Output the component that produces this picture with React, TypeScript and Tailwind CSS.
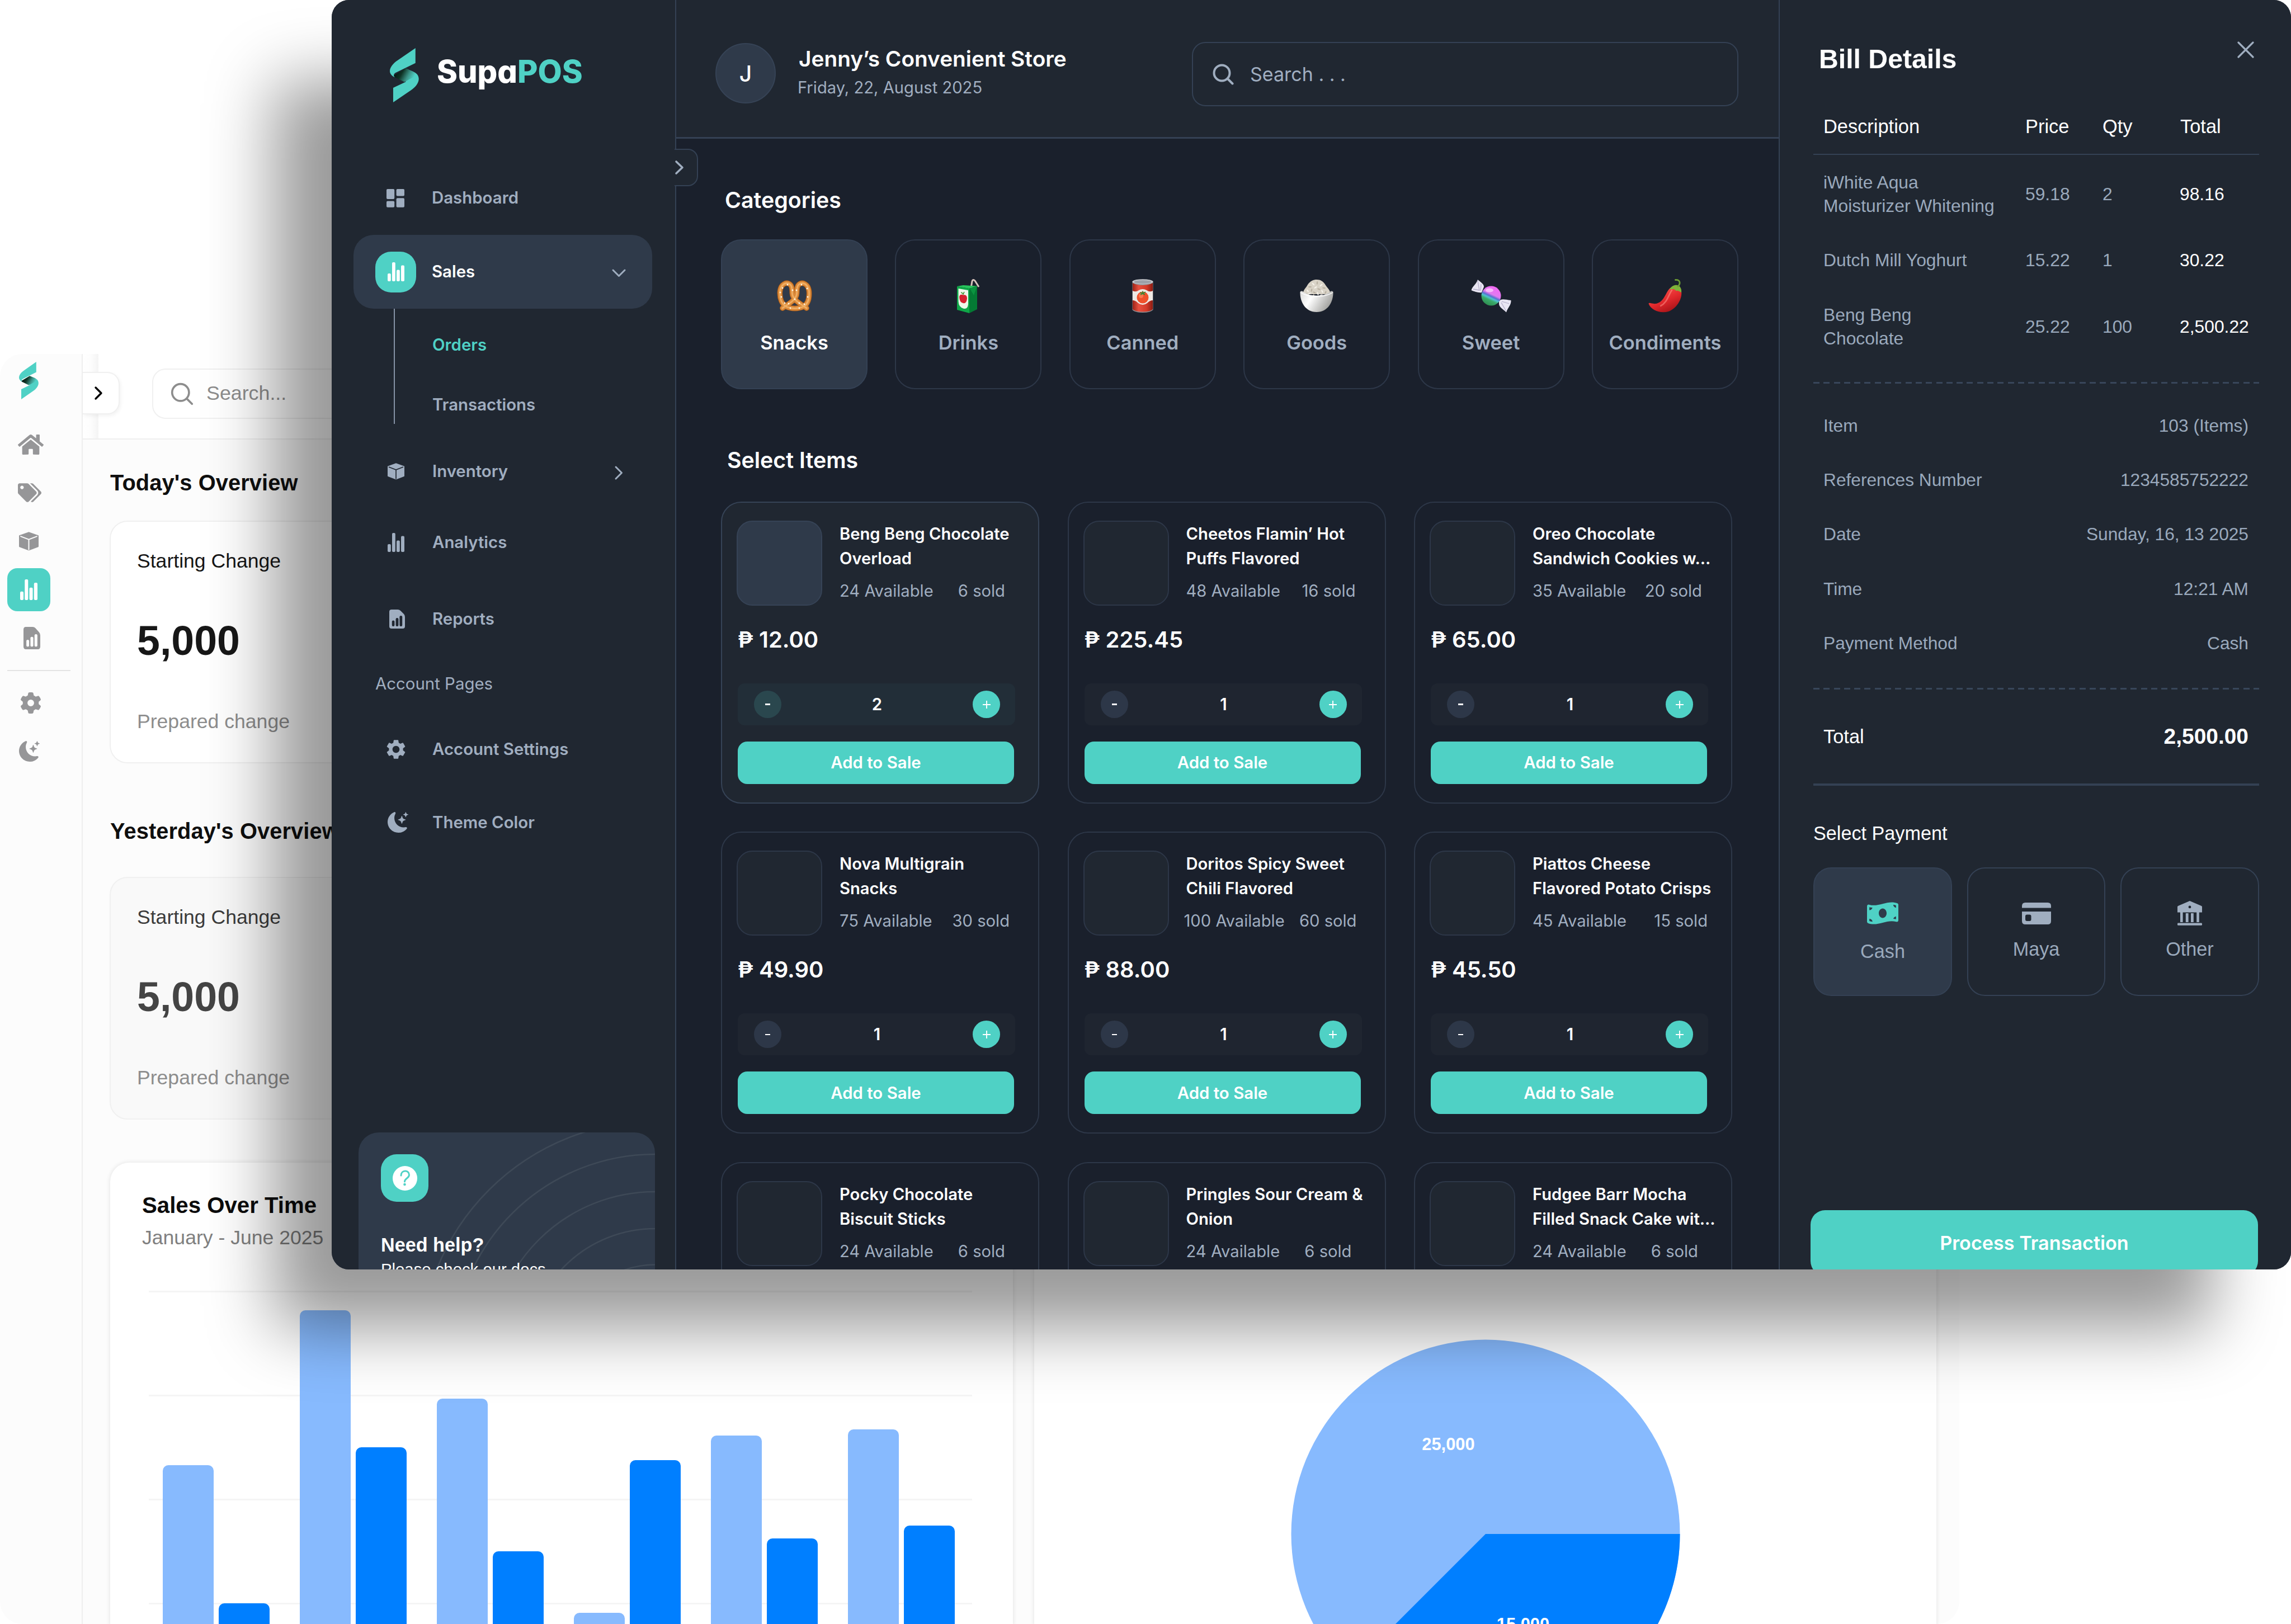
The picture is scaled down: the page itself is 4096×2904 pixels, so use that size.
import type { ReactNode } from "react";
import { BsMoonStarsFill } from "react-icons/bs";
import { FaHome, FaMoneyBillWave, FaTags } from "react-icons/fa";
import { FaGear } from "react-icons/fa6";
import { MdSettings } from "react-icons/md";

/* ---------- icons ---------- */

function LogoMark({ className, id }: { className: string; id: string }) {
  return (
    <svg viewBox="0 0 70 130" className={className} preserveAspectRatio="none">
      <defs>
        <linearGradient id={id} x1="0.05" y1="0.3" x2="0.95" y2="0.6">
          <stop offset="0" stopColor="#04140f" />
          <stop offset="0.35" stopColor="#0f3325" />
          <stop offset="0.7" stopColor="#3c9488" />
          <stop offset="1" stopColor="#4fd1c5" />
        </linearGradient>
      </defs>
      <path d="M38 49 L55 56 C65 60 69.6 66 69.6 74 C69.6 84 61 94 51 101 L8 130 V95 L38 81 Z" fill="#4fd1c5" />
      <path d="M9 66 L38 49 L55 56 C61 59 63 62 60 68 L35 81 L14 71 C10 69 8 68 9 66 Z" fill={`url(#${id})`} />
      <path d="M61.6 0 V35.7 L14 59 C9 61.5 8 66 12 70 C4 66.5 0 61 0 55 C0 46 8 36 19 29 Z" fill="#4fd1c5" />
    </svg>
  );
}

function BarsIcon({ className }: { className: string }) {
  return (
    <svg viewBox="0 0 30 34" className={className} fill="currentColor" preserveAspectRatio="none">
      <rect x="0" y="20" width="5.8" height="14" rx="2" />
      <rect x="8" y="0" width="5.8" height="34" rx="2" />
      <rect x="16" y="13.5" width="5.8" height="20.5" rx="2" />
      <rect x="24" y="5.5" width="6" height="28.5" rx="2" />
    </svg>
  );
}

function DashboardIcon() {
  return (
    <svg viewBox="0 0 32 33" className="h-[33px] w-8" fill="currentColor">
      <rect x="0" y="0" width="14.2" height="18" rx="2" />
      <rect x="0" y="21.5" width="14.2" height="11.3" rx="2" />
      <rect x="17.6" y="0" width="14.4" height="12.6" rx="2" />
      <rect x="17.6" y="16.2" width="14.4" height="16.6" rx="2" />
    </svg>
  );
}

function BoxIcon({ className, seam }: { className: string; seam: string }) {
  return (
    <svg viewBox="0 0 30 30" className={className} preserveAspectRatio="none">
      <path d="M15 0.3 L29.6 5.6 Q30 5.8 30 6.4 V23 Q30 23.8 29.3 24.1 L15 29.6 L0.7 24.1 Q0 23.8 0 23 V6.4 Q0 5.8 0.4 5.6 Z" fill="currentColor" />
      <path d="M2.6 7.2 L15 12 L27.4 7.2 M15 12 V28" fill="none" stroke={seam} strokeWidth="1.7" strokeLinecap="round" />
    </svg>
  );
}

function ReportIcon({ className, ink }: { className: string; ink: string }) {
  return (
    <svg viewBox="0 0 28 34" className={className} preserveAspectRatio="none">
      <path d="M4 0 H15 Q18 0 20 2 L26 8 Q28 10 28 13 V30 Q28 34 24 34 H4 Q0 34 0 30 V4 Q0 0 4 0 Z" fill="currentColor" />
      <g fill={ink}>
        <rect x="4.8" y="19.5" width="4.6" height="10.5" rx="2.2" />
        <rect x="11.6" y="15" width="4.8" height="15" rx="2.2" />
        <rect x="18.4" y="11" width="4.8" height="19" rx="2.2" />
      </g>
    </svg>
  );
}

function Chevron({ className, d, box, width = 3.4 }: { className: string; d: string; box: string; width?: number }) {
  return (
    <svg viewBox={box} className={className} fill="none" stroke="currentColor" strokeWidth={width} strokeLinecap="round" strokeLinejoin="round">
      <path d={d} />
    </svg>
  );
}

function SearchIcon({ className, width }: { className: string; width: number }) {
  return (
    <svg viewBox="0 0 38 38" className={className} fill="none" stroke="currentColor" strokeWidth={width} strokeLinecap="round">
      <circle cx="16.5" cy="16.5" r="14" />
      <path d="M27 27 L35.5 35.5" />
    </svg>
  );
}

function CardIcon() {
  return (
    <svg viewBox="0 0 52 39" className="h-[39px] w-[52px]" fill="currentColor">
      <path d="M6 0 H46 Q52 0 52 6 V9.5 H0 V6 Q0 0 6 0 Z" />
      <path fillRule="evenodd" d="M0 16 H52 V33 Q52 39 46 39 H6 Q0 39 0 33 Z M9 21.5 Q6 21.5 6 24.5 V30 Q6 33 9 33 H13.5 Q16.5 33 16.5 30 V24.5 Q16.5 21.5 13.5 21.5 Z" />
    </svg>
  );
}

function BankIcon() {
  return (
    <svg viewBox="0 0 44 44" className="size-11" fill="currentColor">
      <path fillRule="evenodd" d="M22 0 L43 9 Q44 9.6 44 10.6 V20.5 H0 V10.6 Q0 9.6 1 9 Z M22 8.5 A2.4 2.4 0 1 0 22 13.3 A2.4 2.4 0 1 0 22 8.5 Z" />
      <rect x="5" y="20" width="4.6" height="18" />
      <rect x="14.8" y="22" width="4.8" height="16" />
      <rect x="24" y="22" width="4.8" height="16" />
      <rect x="34.2" y="20" width="4.6" height="18" />
      <rect x="0" y="39.6" width="44" height="4.2" rx="1.4" />
    </svg>
  );
}

function Pretzel() {
  const twist =
    "M10 50 C18 44 31 38 35 27 C37 20 34 13 39 8 C46 2 56 7 57.5 20 C58.5 33 55 43 47 47.5 C38 51.500 26 51.500 17 47.500 C9 43 4.500 33 5.500 20 C7 7 17 2 24 8 C29 13 26 20 28 27 C32 38 45 44 53 50";
  const salt = [
    [8, 30], [10, 14], [19, 8], [28, 18], [14, 41], [24, 50], [32, 34], [40, 50], [49, 43], [55, 30], [54, 15], [44, 8], [35, 18], [40, 41], [21, 42], [6, 22],
  ];
  return (
    <svg viewBox="0 0 63 56" className="h-[56px] w-[63px]" fill="none" strokeLinecap="round">
      <path d={twist} stroke="#a05618" strokeWidth="9.800" />
      <path d={twist} stroke="#da8838" strokeWidth="8" />
      <path d={twist} stroke="#efad62" strokeWidth="3" />
      {salt.map(([x, y]) => (
        <circle key={`${x}-${y}`} cx={x} cy={y} r="1.4" fill="#fff6e6" />
      ))}
    </svg>
  );
}

function JuiceBox() {
  return (
    <svg viewBox="0 0 42 62" className="h-[62px] w-[42px]">
      <path d="M26 17 L28 5 Q29.500 0.500 33 4 L40 15" fill="none" stroke="#d8c3bd" strokeWidth="3" strokeLinejoin="round" />
      <path d="M1 14 L12 12 L37 13.500 L23 18 Z" fill="#27c45c" />
      <path d="M1 14 L23 18 V62 L1 56 Z" fill="#0fa648" />
      <path d="M23 18 L37 13.500 V55 L23 62 Z" fill="#047a34" />
      <path d="M24 18 L37 13.500 L31 30 Z" fill="#0b9440" />
      <path d="M3.500 18 L21 21 V46 Q20 56 12 53.500 Q4 51 3.500 41 Z" fill="#eef7ea" />
      <path d="M5 33 Q6 27 12 29.500 Q19 28 19 36 Q17.500 46 12 44 Q5.500 43 5 33 Z" fill="#d5202f" />
      <path d="M11.500 29 L14 24 M12 27 Q9 26 8.500 24.500" stroke="#3b8f2c" strokeWidth="1.6" fill="none" />
    </svg>
  );
}

function TomatoCan() {
  return (
    <svg viewBox="0 0 38 60" className="h-[60px] w-[38px]">
      <defs>
        <linearGradient id="canBody" x1="0" x2="1">
          <stop offset="0" stopColor="#9c2418" />
          <stop offset="0.3" stopColor="#e8503f" />
          <stop offset="0.7" stopColor="#d33a29" />
          <stop offset="1" stopColor="#8b1c12" />
        </linearGradient>
      </defs>
      <path d="M0.500 4 V55 Q5 60 19 60 Q33 60 37.500 55 V4 Z" fill="#8e8f94" />
      <path d="M1 7 V54 Q6 58.500 19 58.500 Q32 58.500 37 54 V7 Q30 11 19 11 Q8 11 1 7 Z" fill="url(#canBody)" />
      <path d="M1 21 Q7 24 12 20 Q19 16 26 20 Q31 24 37 21 V38 Q32 38 27 43 Q19 49 11 43 Q6 38 1 38 Z" fill="#efe9e4" />
      <circle cx="19" cy="33" r="10.500" fill="#f0512b" />
      <circle cx="16" cy="30" r="4" fill="#ff8a5f" opacity="0.7" />
      <path d="M19 26 L14 24 M19 26 L24 23 M19 26 L19 21.500 M19 26 L15 28 M19 26 L23 28" stroke="#2f8a35" strokeWidth="1.700" />
      <ellipse cx="19" cy="4.800" rx="18.500" ry="4.600" fill="#c9cbd0" />
      <ellipse cx="19" cy="5.200" rx="15.500" ry="3.300" fill="#9da1a9" />
    </svg>
  );
}

function RiceBowl() {
  const grains = [
    [18, 14], [24, 9], [31, 7], [38, 11], [43, 16], [14, 21], [21, 20], [28, 15], [34, 18], [40, 22], [46, 24], [17, 26], [26, 24], [32, 26], [24, 30], [38, 29], [13, 27], [47, 29],
  ];
  return (
    <svg viewBox="0 0 60 60" className="size-[60px]">
      <defs>
        <linearGradient id="bowl" x1="0" x2="1" y1="0" y2="0.4">
          <stop offset="0" stopColor="#d9d9d7" />
          <stop offset="0.4" stopColor="#ffffff" />
          <stop offset="1" stopColor="#a3a3a0" />
        </linearGradient>
      </defs>
      <path d="M6 27 C5 20 11 16 14 10 C19 3 24 1 30 1 C37 1 42 4 46 11 C50 17 55 20 54 27 Z" fill="#d9d3c7" />
      {grains.map(([x, y], i) => (
        <ellipse key={`${x}-${y}`} cx={x} cy={y} rx="3" ry="1.200" fill={i % 2 ? "#f6f2ea" : "#b9b1a3"} transform={`rotate(${(i * 47) % 180} ${x} ${y})`} />
      ))}
      <path d="M0.500 23 Q1 21 4 21.500 Q14 29.500 30 29.500 Q46 29.500 56 21.500 Q59 21 59.500 23 C60 41 50 59 30 59 C10 59 0 41 0.500 23 Z" fill="url(#bowl)" />
      <path d="M1 24 Q14 31.500 30 31.500 Q46 31.500 59 24" fill="none" stroke="#ffffff" strokeWidth="1.400" />
    </svg>
  );
}

function Candy() {
  return (
    <svg viewBox="0 0 72 60" className="h-[60px] w-[72px]">
      <defs>
        <linearGradient id="candyBall" x1="0.7" y1="0.1" x2="0.3" y2="0.95">
          <stop offset="0" stopColor="#f06bf3" />
          <stop offset="0.38" stopColor="#e07bf0" />
          <stop offset="0.5" stopColor="#5a6fd0" />
          <stop offset="0.6" stopColor="#4fc3cf" />
          <stop offset="0.72" stopColor="#3bab6a" />
          <stop offset="1" stopColor="#2f8f52" />
        </linearGradient>
      </defs>
      <path d="M12 1 C16 5 23 8 23 14 L19 24 C13 25 5 22 0.500 20 C2 13 9 10 12 1 Z" fill="#e9e6f3" />
      <path d="M12 3 L15 21 M18 9 L17 21 M4 18 L15 20" stroke="#b5aecb" strokeWidth="1.300" />
      <path d="M50 40 C54 34 60 37 71.500 38 C72 47 66 50 63 59.500 C58 54 50 51 50 44 Z" fill="#e9e6f3" />
      <path d="M54 42 L62 56 M55 40 L68 44" stroke="#b5aecb" strokeWidth="1.300" />
      <circle cx="36" cy="30" r="17.500" fill="url(#candyBall)" />
      <ellipse cx="33" cy="20" rx="7" ry="3.600" fill="#ffd7ff" opacity="0.7" />
    </svg>
  );
}

function Chili() {
  return (
    <svg viewBox="0 0 60 60" className="size-[60px]">
      <defs>
        <linearGradient id="chili" x1="0.2" y1="0" x2="0.8" y2="1">
          <stop offset="0" stopColor="#ff5a50" />
          <stop offset="0.55" stopColor="#e0272b" />
          <stop offset="1" stopColor="#9d1015" />
        </linearGradient>
      </defs>
      <path d="M38 17 C44 12 56 14 59 22 C61 34 52 52 36 58 C22 62 5 56 0.500 44 C2 41 6 45 14 44 C28 41 30 26 38 17 Z" fill="url(#chili)" />
      <path d="M42 20 C36 28 34 42 22 48" fill="none" stroke="#ff9a90" strokeWidth="2.600" strokeLinecap="round" opacity="0.5" />
      <path d="M38 18 C42 12 47 10 52 11 C57 12 60 18 59 24 C56 23 54 20 51 21 C49 22 47 17 44 18 C42 19 40 18 38 18 Z" fill="#7fb23a" />
      <path d="M53 13 C58 8 57 1 48.500 1.500" fill="none" stroke="#6c9c33" strokeWidth="2.800" strokeLinecap="round" />
    </svg>
  );
}

/* ---------- light dashboard window ---------- */

const bars = [
  { x: "a", light: 285, dark: 38 },
  { x: "b", light: 562, dark: 317 },
  { x: "c", light: 404, dark: 131 },
  { x: "d", light: 21.5, dark: 294 },
  { x: "e", light: 338, dark: 154.5 },
  { x: "f", light: 349.5, dark: 177 },
];

function OverviewCard({ muted = false }: { muted?: boolean }) {
  return (
    <div
      className={
        muted
          ? "flex h-[434px] w-[1200px] flex-col rounded-[32px] border-2 border-[#f0f0f0] bg-[#f9f9f9] pl-[47px] pt-[48px]"
          : "flex h-[434px] w-[1200px] flex-col rounded-[32px] border-2 border-[#f0f0f0] bg-white pl-[47px] pt-[48px]"
      }
    >
      <div className={muted ? "text-[35.6px] leading-[44px] text-[#3c3c3c]" : "text-[35.6px] leading-[44px] text-[#161616]"}>Starting Change</div>
      <div className={muted ? "mt-[79px] text-[73.5px] font-bold leading-[84px] text-[#444]" : "mt-[79px] text-[73.5px] font-bold leading-[84px] text-[#171717]"}>
        5,000
      </div>
      <div className="mt-[80px] text-[35.6px] leading-[44px] text-[#8d8d8d]">Prepared change</div>
    </div>
  );
}

function LightWindow() {
  return (
    <div className="absolute left-0 top-[633px] flex h-[2271px] w-[3503px] overflow-hidden rounded-[40px] bg-[#fcfcfc] font-['Liberation_Sans',sans-serif]">
      <aside className="flex w-[148px] shrink-0 flex-col border-r-2 border-[#efefef] text-[#969698]">
        <LogoMark id="foldSmall" className="ml-[34px] mt-[14px] h-[67px] w-[35px]" />
        <FaHome className="ml-[32px] mt-[60px] h-[42px] w-[46px]" />
        <FaTags className="ml-[32px] mt-[48px] h-[34px] w-[42px]" />
        <BoxIcon seam="#fcfcfc" className="ml-[34px] mt-[53px] h-[34px] w-[35px]" />
        <div className="ml-[13px] mt-[31px] flex size-[77px] items-center justify-center rounded-[18px] bg-[#4fd1c5] text-white">
          <BarsIcon className="h-[37px] w-[31px]" />
        </div>
        <ReportIcon ink="#fcfcfc" className="ml-[42px] mt-[28px] h-[40px] w-[30px]" />
        <div className="ml-[13px] mt-[37px] h-[2px] w-[113px] bg-[#e4e4e4]" />
        <FaGear className="ml-[36px] mt-[38px] size-[38px]" />
        <BsMoonStarsFill className="ml-[34px] mt-[49px] size-[37px]" />
      </aside>

      <div className="flex grow flex-col">
        <header className="relative flex h-[153px] shrink-0 items-center border-b-2 border-[#efefef] bg-[linear-gradient(90deg,#ffffff_0,#fdfdfd_14px,#f4f4f4_28px,#ffffff_28px)]">
          <div className="absolute left-0 top-[32px] flex h-[76px] w-[66px] items-center justify-center rounded-r-[22px] border-y-2 border-r-2 border-[#f0f0f0] bg-white pr-[8px] text-black shadow-[2px_3px_6px_rgba(0,0,0,0.05)]">
            <Chevron className="h-[26px] w-[16px]" box="0 0 16 26" d="M3 3 L13 13 L3 23" />
          </div>
          <div className="ml-[124px] mt-[-9px] flex h-[90px] w-[1200px] items-center rounded-[24px] border-2 border-[#f0f0f0] bg-white pl-[31px] text-[#8d8d8d]">
            <SearchIcon className="size-[41px]" width={3.4} />
            <span className="ml-[23px] text-[35.8px] leading-none">Search...</span>
          </div>
        </header>

        <main className="flex flex-col pl-[49px]">
          <h2 className="mt-[53px] text-[39.8px] font-bold leading-[48px] tracking-[0.1px] text-[#0f0f0f]">Today's Overview</h2>
          <div className="-ml-[1px] mt-[44px]">
            <OverviewCard />
          </div>
          <h2 className="mt-[97px] text-[39.8px] font-bold leading-[48px] tracking-[0.1px] text-[#0f0f0f]">Yesterday's Overview</h2>
          <div className="-ml-[1px] mt-[58px]">
            <OverviewCard muted />
          </div>

          <div className="mt-[77px] flex gap-[38px]">
            <section className="flex h-[826px] w-[1614px] shrink-0 flex-col rounded-t-[34px] bg-white shadow-[0_0_6px_2px_rgba(0,0,0,0.07)]">
              <h3 className="ml-[57px] mt-[53px] text-[40.2px] font-bold leading-[48px] text-[#0c0c0c]">Sales Over Time</h3>
              <p className="ml-[57px] mt-[11px] text-[35.6px] leading-[44px] text-[#808080]">January - June 2025</p>
              <div className="ml-[69px] mt-[73px] grid h-[597px] w-[1472px]">
                <div className="col-start-1 row-start-1 flex flex-col gap-[183px]">
                  <div className="h-[3px] bg-[#f5f5f5]" />
                  <div className="h-[3px] bg-[#f5f5f5]" />
                  <div className="h-[3px] bg-[#f5f5f5]" />
                  <div className="h-[3px] bg-[#f5f5f5]" />
                </div>
                <div className="col-start-1 row-start-1 flex items-end gap-[54px] pl-[25px]">
                  {bars.map((b) => (
                    <div key={b.x} className="flex items-end gap-[9px]">
                      <div className="w-[91px] rounded-t-[10px] bg-[#87bafe]" style={{ height: b.light }} />
                      <div className="w-[91px] rounded-t-[10px] bg-[#007fff]" style={{ height: b.dark }} />
                    </div>
                  ))}
                </div>
              </div>
            </section>

            <section className="h-[826px] w-[1613px] shrink-0 rounded-t-[34px] bg-white shadow-[0_0_6px_2px_rgba(0,0,0,0.07)]">
              <svg viewBox="0 0 1613 826" className="h-[826px] w-[1613px]" fontFamily="'Liberation Sans', sans-serif">
                <circle cx="807" cy="664" r="347.5" fill="#87bafe" />
                <path d="M807 664 H1154.5 A347.500 347.500 0 0 1 561.300 909.700 Z" fill="#007fff" />
                <text x="740.500" y="513.500" fill="#fff" fontSize="30.900" fontWeight="700" textAnchor="middle">
                  25,000
                </text>
                <text x="874" y="836" fill="#fff" fontSize="30.900" fontWeight="700" textAnchor="middle">
                  15,000
                </text>
              </svg>
            </section>
          </div>
        </main>
      </div>
    </div>
  );
}

/* ---------- dark point-of-sale window ---------- */

function NavRow({ icon, label, className, trailing }: { icon: ReactNode; label: string; className: string; trailing?: ReactNode }) {
  return (
    <div className={`flex shrink-0 items-center ${className}`}>
      <div className="flex w-[73px] justify-center">{icon}</div>
      <span className="ml-[29px] text-[29.4px] font-semibold leading-none">{label}</span>
      {trailing}
    </div>
  );
}

function Sidebar() {
  return (
    <aside className="relative z-10 flex w-[616px] shrink-0 flex-col border-r-2 border-[#344154] bg-[#202731] text-[#a0aec0]">
      <div className="flex h-[288px] shrink-0 items-start pl-[104px] pt-[86px]">
        <LogoMark id="foldLarge" className="h-[97px] w-[52px]" />
        <div className="ml-[32px] mt-[7px] text-[56px] font-extrabold leading-[70px] text-white [font-feature-settings:'cv11']">
          Supa<span className="text-[#4fd1c5]">POS</span>
        </div>
      </div>

      <nav className="flex shrink-0 flex-col">
        <NavRow className="h-[132px] pl-[77px]" icon={<DashboardIcon />} label="Dashboard" />
        <div className="ml-[39px] flex h-[132px] w-[534px] shrink-0 items-center rounded-[36px] bg-[#2f3a4a] pl-[39px] text-white">
          <div className="flex size-[73px] items-center justify-center rounded-[28px] bg-[#4fd1c5]">
            <BarsIcon className="h-[34px] w-[30px]" />
          </div>
          <span className="ml-[28px] text-[29.4px] font-semibold leading-none">Sales</span>
          <Chevron className="ml-auto mr-[46px] mt-1 h-[17px] w-[27px] text-[#a0aec0]" box="0 0 27 17" d="M3 3 L13.500 13.500 L24 3" width={3} />
        </div>
        <div className="flex shrink-0">
          <div className="ml-[111px] h-[206px] w-[2px] bg-[#8592a6]" />
          <div className="ml-[67px] flex flex-col text-[29.4px] font-semibold leading-none">
            <span className="flex h-[130px] items-center text-[#4fd1c5]">Orders</span>
            <span className="flex h-[84px] items-center">Transactions</span>
          </div>
        </div>
        <NavRow
          className="h-[154px] pl-[78px]"
          icon={<BoxIcon seam="#202731" className="h-[30px] w-[30px]" />}
          label="Inventory"
          trailing={<Chevron className="ml-auto mr-[92px] mt-1 h-[27px] w-[17px]" box="0 0 17 27" d="M3 3 L13.500 13.500 L3 24" width={3} />}
        />
        <NavRow className="h-[100px] pl-[78px]" icon={<BarsIcon className="h-[34px] w-[30px]" />} label="Analytics" />
        <NavRow className="h-[173px] pl-[78px]" icon={<ReportIcon ink="#202731" className="ml-1 h-[34px] w-[28px]" />} label="Reports" />
        <div className="flex h-[59px] shrink-0 items-center pl-[78px] text-[29.4px] leading-none">Account Pages</div>
        <NavRow className="h-[175px] pl-[78px]" icon={<MdSettings className="size-[42px]" />} label="Account Settings" />
        <NavRow className="h-[87px] pl-[78px]" icon={<BsMoonStarsFill className="ml-[8px] size-[37px]" />} label="Theme Color" />
      </nav>

      <div className="relative ml-[48px] mt-[511px] h-[400px] w-[530px] shrink-0 overflow-hidden rounded-[36px] bg-[#2f3a4a] font-['Liberation_Sans',sans-serif] text-white">
        <svg viewBox="0 0 530 400" className="absolute inset-0" fill="none" stroke="#3e4957" strokeWidth="2.600">
          <circle cx="530" cy="400" r="420" />
          <circle cx="530" cy="400" r="361" />
          <circle cx="530" cy="400" r="294" />
          <circle cx="530" cy="400" r="228" />
          <circle cx="530" cy="400" r="163.500" />
        </svg>
        <div className="relative flex flex-col pl-[40px] pt-[39px]">
          <div className="flex size-[85px] items-center justify-center rounded-[28px] bg-[#4fd1c5]">
            <svg viewBox="0 0 44 44" className="size-11">
              <circle cx="22" cy="22" r="22" fill="#fff" />
              <path d="M15 17 C15 6.500 29.500 6.500 29.500 16 C29.500 22 21.500 22 21.500 28" fill="none" stroke="#4fd1c5" strokeWidth="3" strokeLinecap="round" />
              <circle cx="21.500" cy="33" r="2.300" fill="#4fd1c5" />
            </svg>
          </div>
          <div className="mt-[55px] text-[34.2px] font-bold leading-[44px]">Need help?</div>
          <div className="mt-[4px] text-[29.3px] leading-[36px]">Please check our docs</div>
        </div>
      </div>

      <div className="absolute left-[613px] top-[266px] flex h-[67px] w-[42px] items-center rounded-r-[18px] border-y-2 border-r-2 border-[#344154] bg-[#202731]">
        <Chevron className="h-[27px] w-[17px]" box="0 0 17 27" d="M3 3 L14 13.500 L3 24" width={3.6} />
      </div>
    </aside>
  );
}

const categories: { name: string; icon: ReactNode; active?: boolean }[] = [
  { name: "Snacks", icon: <Pretzel />, active: true },
  { name: "Drinks", icon: <JuiceBox /> },
  { name: "Canned", icon: <TomatoCan /> },
  { name: "Goods", icon: <RiceBowl /> },
  { name: "Sweet", icon: <Candy /> },
  { name: "Condiments", icon: <Chili /> },
];

type Product = { title: [string, string]; available: string; sold: string; span: string; price?: string; qty?: number; active?: boolean };

const products: Product[] = [
  { title: ["Beng Beng Chocolate", "Overload"], available: "24 Available", sold: "6 sold", span: "w-[296px]", price: "₱ 12.00", qty: 2, active: true },
  { title: ["Cheetos Flamin’ Hot", "Puffs Flavored"], available: "48 Available", sold: "16 sold", span: "w-[303px]", price: "₱ 225.45", qty: 1 },
  { title: ["Oreo Chocolate", "Sandwich Cookies w..."], available: "35 Available", sold: "20 sold", span: "w-[303px]", price: "₱ 65.00", qty: 1 },
  { title: ["Nova Multigrain", "Snacks"], available: "75 Available", sold: "30 sold", span: "w-[304px]", price: "₱ 49.90", qty: 1 },
  { title: ["Doritos Spicy Sweet", "Chili Flavored"], available: "100 Available", sold: "60 sold", span: "-ml-[4px] w-[309px]", price: "₱ 88.00", qty: 1 },
  { title: ["Piattos Cheese", "Flavored Potato Crisps"], available: "45 Available", sold: "15 sold", span: "w-[313px]", price: "₱ 45.50", qty: 1 },
  { title: ["Pocky Chocolate", "Biscuit Sticks"], available: "24 Available", sold: "6 sold", span: "w-[296px]" },
  { title: ["Pringles Sour Cream &", "Onion"], available: "24 Available", sold: "6 sold", span: "w-[296px]" },
  { title: ["Fudgee Barr Mocha", "Filled Snack Cake wit..."], available: "24 Available", sold: "6 sold", span: "w-[296px]" },
];

function PurchaseControls({ p }: { p: Product }) {
  return (
    <>
      <div className="ml-[2px] mt-[37px] text-[40px] font-semibold leading-[48px] text-white">{p.price}</div>
      <div
        className={
          p.active
            ? "ml-[2px] mt-[54px] flex h-[75px] w-[496px] items-center justify-between rounded-[12px] bg-[#222e38] pl-[29px] pr-[27px]"
            : "ml-[2px] mt-[54px] flex h-[75px] w-[496px] items-center justify-between rounded-[12px] bg-[#1f2530] pl-[29px] pr-[27px]"
        }
      >
        <button className={p.active ? "flex size-[49px] items-center justify-center rounded-full bg-[#2a474e]" : "flex size-[49px] items-center justify-center rounded-full bg-[#2d3748]"}>
          <span className="h-[2.500px] w-[9px] bg-white" />
        </button>
        <span className="text-[29.4px] font-semibold leading-none text-white">{p.qty}</span>
        <button className="flex size-[49px] items-center justify-center rounded-full bg-[#4fd1c5]">
          <svg viewBox="0 0 14 14" className="size-[14px]" stroke="#fff" strokeWidth="1.900">
            <path d="M7 0 V14 M0 7 H14" />
          </svg>
        </button>
      </div>
      <button className="ml-[2px] mt-[29px] flex h-[76px] w-[494px] items-center justify-center rounded-[17px] bg-[#4fd1c5] text-[29.4px] font-semibold leading-none text-white">
        Add to Sale
      </button>
    </>
  );
}

function ProductCard({ p }: { p: Product }) {
  return (
    <article
      className={
        p.active
          ? "flex h-[540px] w-[569px] flex-col rounded-[36px] border-[2.500px] border-[#364356] bg-[#202731] pl-[26px] pt-[32px]"
          : "flex h-[540px] w-[569px] flex-col rounded-[36px] border-[2.500px] border-[#2d3748] pl-[26px] pt-[32px]"
      }
    >
      <div className="flex">
        <div
          className={
            p.active
              ? "h-[152px] w-[153px] shrink-0 rounded-[28px] border-2 border-[#364356] bg-[#2f3a4a]"
              : "h-[152px] w-[153px] shrink-0 rounded-[28px] border-2 border-[#2d3748] bg-[#202731]"
          }
        />
        <div className="ml-[31px] mt-[2px] flex flex-col">
          <h3 className="flex flex-col whitespace-nowrap text-[29.2px] font-semibold leading-[44px] text-white">
            <span>{p.title[0]}</span>
            <span>{p.title[1]}</span>
          </h3>
          <div className={`mt-[18px] flex justify-between whitespace-nowrap text-[29.2px] leading-[36px] text-[#a0aec0] ${p.span}`}>
            <span>{p.available}</span>
            <span>{p.sold}</span>
          </div>
        </div>
      </div>
      {p.price && <PurchaseControls p={p} />}
    </article>
  );
}

function Catalog() {
  return (
    <section className="flex h-full w-[1971px] shrink-0 flex-col bg-[#1a202c]">
      <header className="flex h-[248px] shrink-0 items-start border-b-[3px] border-[#344154] bg-[#202731] pl-[70px]">
        <div className="mt-[77px] flex size-[108px] items-center justify-center rounded-full border-2 border-[#364356] bg-[#2f3a4a] text-[39px] font-medium leading-none text-white">J</div>
        <div className="ml-[41px] mt-[81px] flex flex-col">
          <div className="text-[38.8px] font-semibold leading-[48px] text-white">Jenny’s Convenient Store</div>
          <div className="-ml-[2px] mt-[10px] text-[29.2px] leading-[36px] text-[#a0aec0]">Friday, 22, August 2025</div>
        </div>
        <div className="ml-auto mr-[72px] mt-[75px] flex h-[115px] w-[977px] items-center rounded-[24px] border-[2.500px] border-[#344154] pl-[35px] text-[#a0aec0]">
          <SearchIcon className="size-[38px]" width={4} />
          <span className="ml-[29px] text-[34px] leading-none">Search . . .</span>
        </div>
      </header>

      <div className="flex flex-col pl-[80px]">
        <h2 className="ml-[7px] mt-[86px] text-[39.3px] font-semibold leading-[48px] text-white">Categories</h2>
        <div className="mt-[46px] flex w-[1819px] justify-between">
          {categories.map((c) => (
            <div
              key={c.name}
              className={
                c.active
                  ? "flex h-[268px] w-[262px] flex-col items-center rounded-[36px] border-2 border-[#344154] bg-[#2f3a4a] text-white"
                  : "flex h-[268px] w-[262px] flex-col items-center rounded-[36px] border-2 border-[#2d3748] text-[#a0aec0]"
              }
            >
              <div className="mt-[66px] flex h-[66px] items-center">{c.icon}</div>
              <span className="mt-[32px] text-[34.4px] font-semibold leading-[38px]">{c.name}</span>
            </div>
          ))}
        </div>
        <h2 className="ml-[11px] mt-[103px] text-[39.3px] font-semibold leading-[48px] text-white">Select Items</h2>
        <div className="mt-[50px] grid w-[1808px] grid-cols-[569px_569px_569px] justify-between gap-y-[50.400px]">
          {products.map((p) => (
            <ProductCard key={p.title[0]} p={p} />
          ))}
        </div>
      </div>
    </section>
  );
}

const lines = [
  { name: ["iWhite Aqua", "Moisturizer Whitening"], price: "59.18", qty: "2", total: "98.16", h: "h-[139px]" },
  { name: ["Dutch Mill Yoghurt"], price: "15.22", qty: "1", total: "30.22", h: "h-[97px]" },
  { name: ["Beng Beng", "Chocolate"], price: "25.22", qty: "100", total: "2,500.22", h: "h-[141px]" },
];

const details = [
  ["Item", "103 (Items)"],
  ["References Number", "1234585752222"],
  ["Date", "Sunday, 16, 13 2025"],
  ["Time", "12:21 AM"],
  ["Payment Method", "Cash"],
];

function Dashes() {
  return <div className="h-[3px] w-[797px] bg-[repeating-linear-gradient(90deg,#38465a_0_11px,transparent_11px_18.300px)]" />;
}

function Bill() {
  return (
    <aside className="flex h-full grow flex-col border-l-2 border-[#344154] bg-[#202731] pl-[60px] font-['Liberation_Sans',sans-serif] text-[#9aa9bc]">
      <div className="flex h-[177px] shrink-0 items-start justify-between pr-[66px]">
        <h2 className="ml-[10px] mt-[77px] text-[48.2px] font-bold leading-[56px] text-white">Bill Details</h2>
        <svg viewBox="0 0 30 30" className="mt-[74px] size-[30px]" stroke="#a0aec0" strokeWidth="3.200" strokeLinecap="round">
          <path d="M2 2 L28 28 M28 2 L2 28" />
        </svg>
      </div>

      <div className="flex w-[797px] shrink-0 flex-col">
        <div className="grid h-[100px] grid-cols-[361px_138px_139px_1fr] items-center border-b-2 border-[#344154] pl-[18px] text-[34.4px] leading-none text-white">
          <span>Description</span>
          <span>Price</span>
          <span>Qty</span>
          <span>Total</span>
        </div>
        {lines.map((l) => (
          <div key={l.total} className={`grid grid-cols-[361px_138px_138px_1fr] items-center pl-[18px] text-[31.8px] leading-[42px] ${l.h}`}>
            <span className="flex flex-col whitespace-nowrap">
              {l.name.map((n) => (
                <span key={n}>{n}</span>
              ))}
            </span>
            <span>{l.price}</span>
            <span>{l.qty}</span>
            <span className="text-white">{l.total}</span>
          </div>
        ))}
      </div>

      <div className="mt-[29px] shrink-0">
        <Dashes />
      </div>
      <div className="mt-[27px] flex w-[797px] shrink-0 flex-col pl-[18px] pr-[19px] text-[31.7px]">
        {details.map(([k, v]) => (
          <div key={k} className="flex h-[97.300px] items-center justify-between leading-none">
            <span>{k}</span>
            <span>{v}</span>
          </div>
        ))}
      </div>
      <div className="mt-[31px] shrink-0">
        <Dashes />
      </div>

      <div className="flex h-[168px] w-[797px] shrink-0 items-center justify-between pl-[18px] pr-[19px] leading-none text-white">
        <span className="text-[34.4px]">Total</span>
        <span className="text-[38.9px] font-bold">2,500.00</span>
      </div>
      <div className="h-[4px] w-[797px] shrink-0 bg-[#344154]" />

      <h3 className="mt-[63px] shrink-0 text-[34.2px] leading-[44px] text-white">Select Payment</h3>
      <div className="mt-[39px] flex w-[797px] shrink-0 justify-between text-[34.2px] leading-[40px]">
        <div className="flex h-[230px] w-[248px] flex-col items-center rounded-[32px] border-2 border-[#344154] bg-[#2f3a4a]">
          <FaMoneyBillWave className="mt-[57px] h-[46px] w-[56px] text-[#4fd1c5]" />
          <span className="mt-[25px]">Cash</span>
        </div>
        <div className="flex h-[230px] w-[247px] flex-col items-center rounded-[32px] border-2 border-[#344154] text-[#a0aec0]">
          <div className="mt-[58px] flex h-11 items-center">
            <CardIcon />
          </div>
          <span className="mt-[22px] text-[#9aa9bc]">Maya</span>
        </div>
        <div className="flex h-[230px] w-[248px] flex-col items-center rounded-[32px] border-2 border-[#344154] text-[#a0aec0]">
          <div className="mt-[58px] flex h-11 items-center">
            <BankIcon />
          </div>
          <span className="mt-[22px] text-[#9aa9bc]">Other</span>
        </div>
      </div>

      <button className="-ml-[5px] mt-[383px] flex h-[117px] w-[800px] shrink-0 items-center justify-center rounded-[26px] bg-[#4fd1c5] font-['Inter',sans-serif] text-[34.2px] font-semibold leading-none text-white">
        Process Transaction
      </button>
    </aside>
  );
}

export default function App() {
  return (
    <div className="relative h-[2904px] w-[4096px] overflow-hidden bg-white">
      <LightWindow />
      <div className="absolute left-[593px] top-0 h-[2270px] w-[3503px] rounded-[31px] font-['Inter',sans-serif] shadow-[-122px_125px_120px_-19px_rgba(0,0,0,0.4)]">
        <div className="flex h-full w-full overflow-hidden rounded-[31px] bg-[#1a202c]">
          <Sidebar />
          <Catalog />
          <Bill />
        </div>
      </div>
    </div>
  );
}
